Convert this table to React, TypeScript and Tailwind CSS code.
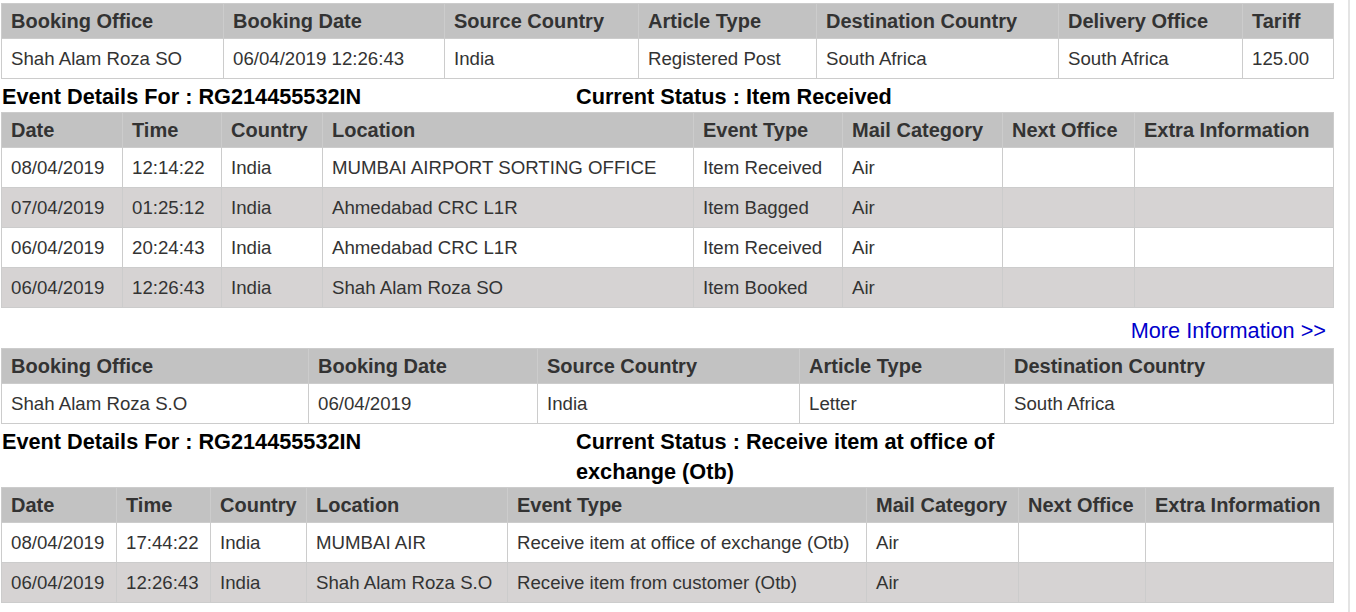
import React from "react";

type Col = { label: string; w: number };

const bookingCols1: Col[] = [
  { label: "Booking Office", w: 222 },
  { label: "Booking Date", w: 221 },
  { label: "Source Country", w: 194 },
  { label: "Article Type", w: 178 },
  { label: "Destination Country", w: 242 },
  { label: "Delivery Office", w: 184 },
  { label: "Tariff", w: 91 },
];

const bookingRows1 = [
  ["Shah Alam Roza SO", "06/04/2019 12:26:43", "India", "Registered Post", "South Africa", "South Africa", "125.00"],
];

const eventCols1: Col[] = [
  { label: "Date", w: 121 },
  { label: "Time", w: 99 },
  { label: "Country", w: 101 },
  { label: "Location", w: 371 },
  { label: "Event Type", w: 149 },
  { label: "Mail Category", w: 160 },
  { label: "Next Office", w: 132 },
  { label: "Extra Information", w: 199 },
];

const eventRows1 = [
  ["08/04/2019", "12:14:22", "India", "MUMBAI AIRPORT SORTING OFFICE", "Item Received", "Air", "", ""],
  ["07/04/2019", "01:25:12", "India", "Ahmedabad CRC L1R", "Item Bagged", "Air", "", ""],
  ["06/04/2019", "20:24:43", "India", "Ahmedabad CRC L1R", "Item Received", "Air", "", ""],
  ["06/04/2019", "12:26:43", "India", "Shah Alam Roza SO", "Item Booked", "Air", "", ""],
];

const bookingCols2: Col[] = [
  { label: "Booking Office", w: 307 },
  { label: "Booking Date", w: 229 },
  { label: "Source Country", w: 262 },
  { label: "Article Type", w: 205 },
  { label: "Destination Country", w: 329 },
];

const bookingRows2 = [["Shah Alam Roza S.O", "06/04/2019", "India", "Letter", "South Africa"]];

const eventCols2: Col[] = [
  { label: "Date", w: 115 },
  { label: "Time", w: 94 },
  { label: "Country", w: 96 },
  { label: "Location", w: 201 },
  { label: "Event Type", w: 359 },
  { label: "Mail Category", w: 152 },
  { label: "Next Office", w: 127 },
  { label: "Extra Information", w: 188 },
];

const eventRows2 = [
  ["08/04/2019", "17:44:22", "India", "MUMBAI AIR", "Receive item at office of exchange (Otb)", "Air", "", ""],
  ["06/04/2019", "12:26:43", "India", "Shah Alam Roza S.O", "Receive item from customer (Otb)", "Air", "", ""],
];

function DataTable({ cols, rows }: { cols: Col[]; rows: string[][] }) {
  return (
    <table className="ml-px w-[1332px] table-fixed border-collapse text-[#333333]">
      <colgroup>
        {cols.map((c) => (
          <col key={c.label} style={{ width: c.w }} />
        ))}
      </colgroup>
      <thead>
        <tr className="h-[35px] bg-[#c2c2c2]">
          {cols.map((c) => (
            <th
              key={c.label}
              className="whitespace-nowrap border border-[#cccccc] px-[9px] text-left text-[20px] font-bold"
            >
              {c.label}
            </th>
          ))}
        </tr>
      </thead>
      <tbody>
        {rows.map((r, i) => (
          <tr key={i} className={i % 2 === 1 ? "h-[40px] bg-[#d6d3d3]" : "h-[40px] bg-white"}>
            {r.map((v, j) => (
              <td key={j} className="whitespace-nowrap border border-[#cccccc] px-[9px] text-[18.67px]">
                {v}
              </td>
            ))}
          </tr>
        ))}
      </tbody>
    </table>
  );
}

function EventHeading({ status }: { status: string }) {
  return (
    <div className="mt-[3px] flex text-[21.7px] font-bold leading-[30px] text-black">
      <div className="w-[576px] shrink-0 pl-[2px]">Event Details For : RG214455532IN</div>
      <div className="w-[440px]">{`Current Status : ${status}`}</div>
    </div>
  );
}

export default function App() {
  return (
    <div className="flex min-h-[612px] bg-white font-['Liberation_Sans',Arial,sans-serif]">
      <div className="w-[1348px] pt-[3px]">
        <DataTable cols={bookingCols1} rows={bookingRows1} />
        <EventHeading status="Item Received" />
        <DataTable cols={eventCols1} rows={eventRows1} />
        <div className="flex h-[40px] w-[1334px] items-center justify-end pr-[8px] pt-[6px]">
          <a href="#" className="text-[21.7px] text-[#0000cc]">
            More Information &gt;&gt;
          </a>
        </div>
        <DataTable cols={bookingCols2} rows={bookingRows2} />
        <EventHeading status="Receive item at office of exchange (Otb)" />
        <DataTable cols={eventCols2} rows={eventRows2} />
      </div>
      <div className="w-[2px] bg-[#e4e4e4]" />
    </div>
  );
}
